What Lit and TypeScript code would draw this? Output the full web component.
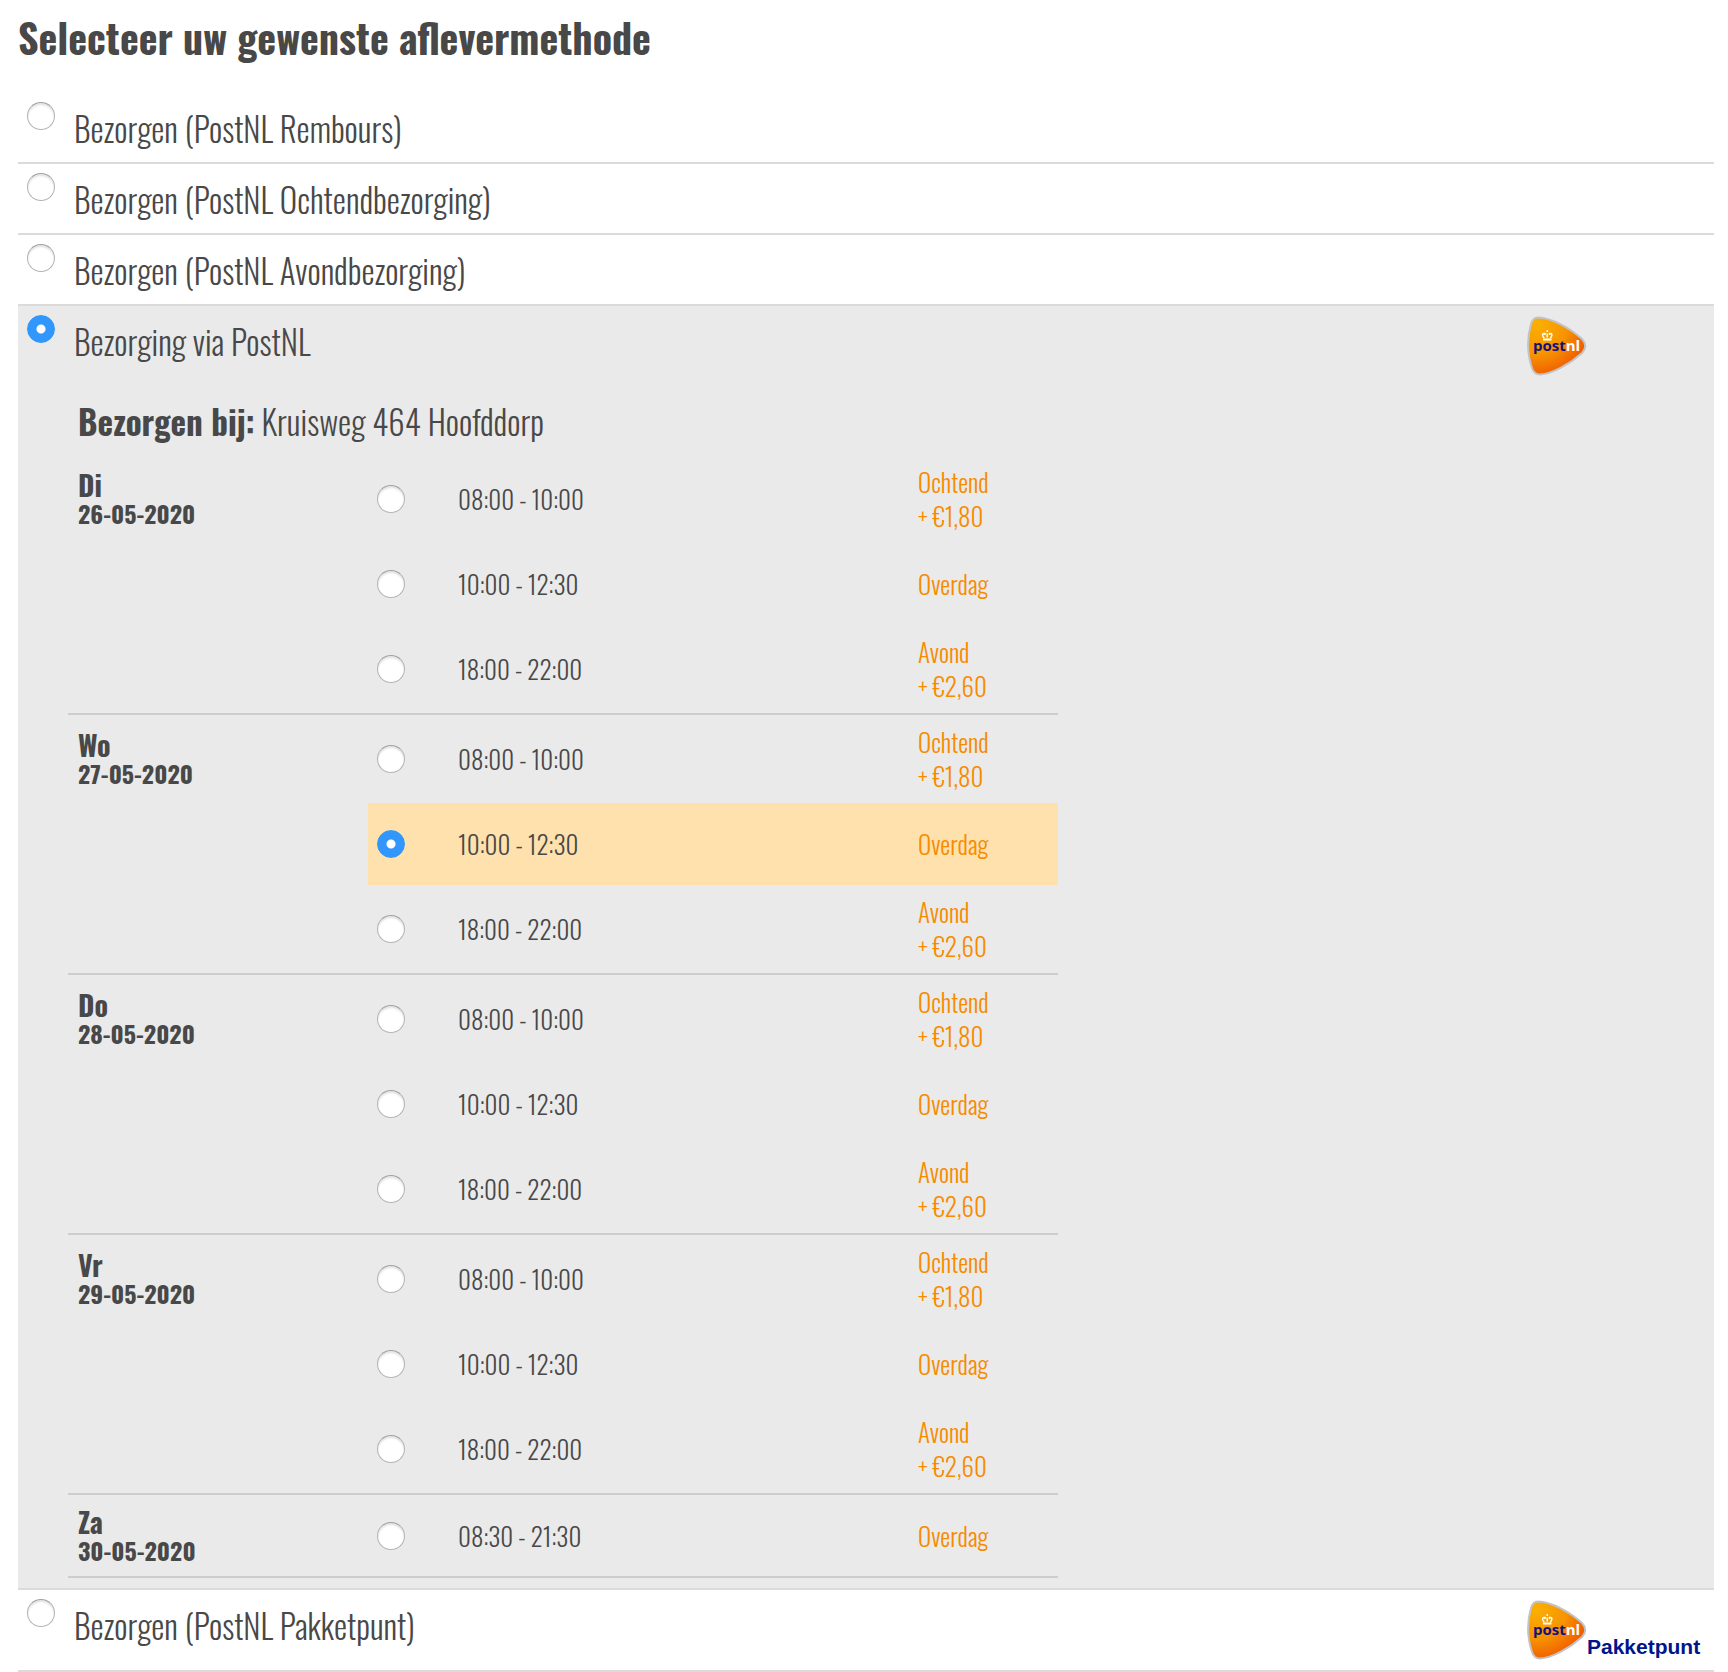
import { LitElement, html, css, svg, nothing } from "lit";
import { customElement, property, state } from "lit/decorators.js";
import { classMap } from "lit/directives/class-map.js";

interface Slot {
  time: string;
  label: string;
  price?: string;
}

interface Day {
  name: string;
  date: string;
  slots: Slot[];
}

interface Method {
  id: string;
  label: string;
  logo?: "plain" | "point";
}

const weekdaySlots: Slot[] = [
  { time: "08:00 - 10:00", label: "Ochtend", price: "+ €1,80" },
  { time: "10:00 - 12:30", label: "Overdag" },
  { time: "18:00 - 22:00", label: "Avond", price: "+ €2,60" },
];

const days: Day[] = [
  { name: "Di", date: "26-05-2020", slots: weekdaySlots },
  { name: "Wo", date: "27-05-2020", slots: weekdaySlots },
  { name: "Do", date: "28-05-2020", slots: weekdaySlots },
  { name: "Vr", date: "29-05-2020", slots: weekdaySlots },
  { name: "Za", date: "30-05-2020", slots: [{ time: "08:30 - 21:30", label: "Overdag" }] },
];

const methods: Method[] = [
  { id: "rembours", label: "Bezorgen (PostNL Rembours)" },
  { id: "ochtend", label: "Bezorgen (PostNL Ochtendbezorging)" },
  { id: "avond", label: "Bezorgen (PostNL Avondbezorging)" },
  { id: "postnl", label: "Bezorging via PostNL", logo: "plain" },
  { id: "pakketpunt", label: "Bezorgen (PostNL Pakketpunt)", logo: "point" },
];

const radioStyles = css`
  .radio {
    appearance: none;
    box-sizing: border-box;
    flex: none;
    width: 28px;
    height: 28px;
    margin: 0;
    border: 1px solid #b4b4b4;
    border-top-color: #a0a0a0;
    border-radius: 50%;
    background: #fff;
    box-shadow: inset 0 2px 2px #e2e2e2;
  }
  .radio:checked {
    border-color: #3297fd;
    background: radial-gradient(circle, #fff 0 4px, #3297fd 5px);
    box-shadow: none;
  }
`;

@customElement("postnl-logo")
export class PostnlLogo extends LitElement {
  @property({ type: Boolean }) point = false;

  static styles = css`
    :host {
      display: flex;
      align-items: flex-start;
    }
    .mark {
      display: block;
      flex: none;
      width: 60px;
      height: 60px;
    }
    .wordmark {
      font: bold 15px/20px "Open Sans", sans-serif;
    }
    .caption {
      padding-top: 35px;
      font: bold 21px/24px "Liberation Sans", Arial, sans-serif;
      color: #00148c;
    }
  `;

  render() {
    return html`
      <svg class="mark" viewBox="0 0 60 60" role="img" aria-label="PostNL">
        <defs>
          <radialGradient id="fill" cx="0.15" cy="0.12" r="1.05">
            <stop offset="0" stop-color="#fbb000" />
            <stop offset="0.5" stop-color="#f79400" />
            <stop offset="1" stop-color="#ee4a00" />
          </radialGradient>
        </defs>
        ${svg`
          <path
            d="M11 1.500C25 2 43 12 55 23Q61.500 30 55 37C43 48 25 58 13 58.500Q7 58.500 5 52C0 37 0 22 4 8Q6 1.500 11 1.500Z"
            fill="url(#fill)" stroke="#c3c3c7" stroke-width="2"/>
          <path d="M16 23.500H24.500" fill="none" stroke="#fff" stroke-width="2"/>
          <path d="M20.200 21.500V17.500M20.200 16V14M17.500 21.500H16.500Q14 17.200 18 17.500V19M23 21.500H24Q26.500 17.200 22.500 17.500V19"
            fill="none" stroke="#fff" stroke-width="1.400"/>
        `}
        <text class="wordmark" x="6" y="35" fill="#14107c">post<tspan fill="#fff">nl</tspan></text>
      </svg>
      ${this.point ? html`<span class="caption">Pakketpunt</span>` : nothing}
    `;
  }
}

@customElement("delivery-schedule")
export class DeliverySchedule extends LitElement {
  @state() private selected = "1-1";

  static styles = [
    radioStyles,
    css`
      :host {
        display: block;
        max-width: 990px;
      }
      .address {
        margin: 0;
        padding: 0 10px 13px;
        font-size: 33px;
        line-height: 40px;
      }
      .address strong {
        font-weight: 700;
      }
      .day {
        display: grid;
        grid-template-columns: 300px 1fr;
        padding: 3px 0;
        border-bottom: 2px solid #cdcdcd;
      }
      .date {
        display: flex;
        flex-direction: column;
        padding: 12px 10px 0;
        font-size: 24px;
        line-height: 29px;
        font-weight: bold;
      }
      .name {
        font-size: 28px;
      }
      .slots {
        display: grid;
        gap: 3px;
      }
      .slot {
        display: grid;
        grid-template-columns: 81px 1fr 140px;
        align-items: center;
        min-height: 82px;
        padding-left: 9px;
        font-size: 25px;
        line-height: 34px;
        cursor: pointer;
      }
      .single .date {
        padding-top: 9px;
      }
      .single .slot {
        min-height: 75px;
      }
      .chosen {
        background: #ffe1ad;
      }
      .part {
        display: flex;
        flex-direction: column;
        color: #f78b00;
      }
    `,
  ];

  render() {
    return html`
      <p class="address"><strong>Bezorgen bij:</strong> Kruisweg 464 Hoofddorp</p>
      ${days.map(
        (day, d) => html`
          <div
            class=${classMap({ day: true, single: day.slots.length === 1 })}
            role="group"
            aria-labelledby="day-${d}"
          >
            <div class="date" id="day-${d}">
              <span class="name">${day.name}</span>
              <span>${day.date}</span>
            </div>
            <div class="slots">
              ${day.slots.map((slot, s) => this.renderSlot(slot, `${d}-${s}`))}
            </div>
          </div>
        `,
      )}
    `;
  }

  private renderSlot(slot: Slot, key: string) {
    const checked = this.selected === key;
    return html`
      <label class=${classMap({ slot: true, chosen: checked })} for="slot-${key}">
        <input
          class="radio"
          type="radio"
          name="slot"
          id="slot-${key}"
          .checked=${checked}
          @change=${() => (this.selected = key)}
        />
        <span>${slot.time}</span>
        <span class="part">
          <span>${slot.label}</span>
          ${slot.price ? html`<span>${slot.price}</span>` : nothing}
        </span>
      </label>
    `;
  }
}

@customElement("app-root")
export class AppRoot extends LitElement {
  @state() private method = "postnl";

  static styles = [
    radioStyles,
    css`
      :host {
        display: block;
        padding: 11px 14px 0 18px;
        background: #fff;
        color: #484848;
        font-family: Oswald, "Liberation Sans Narrow", "Roboto Condensed", "Liberation Sans", sans-serif;
        font-weight: 300;
      }
      .title {
        margin: 0;
        padding-bottom: 30px;
        font-size: 40px;
        line-height: 52px;
        font-weight: bold;
      }
      .method {
        border-bottom: 2px solid #dbdbdb;
      }
      .active {
        background: #eaeaea;
      }
      .head {
        display: flex;
        align-items: flex-start;
        min-height: 69px;
        padding-left: 9px;
      }
      .head .radio {
        margin-top: 9px;
      }
      .label {
        flex: 1;
        padding: 16px 0 0 19px;
        font-size: 33px;
        line-height: 40px;
        cursor: pointer;
      }
      .logo {
        width: 187px;
        padding: 10px 0;
      }
      .schedule {
        padding: 16px 0 10px 50px;
      }
    `,
  ];

  render() {
    return html`
      <h1 class="title">Selecteer uw gewenste aflevermethode</h1>
      ${methods.map((m) => this.renderMethod(m))}
    `;
  }

  private renderMethod(m: Method) {
    const checked = this.method === m.id;
    return html`
      <section class=${classMap({ method: true, active: checked })}>
        <div class="head">
          <input
            class="radio"
            type="radio"
            name="method"
            id=${m.id}
            .checked=${checked}
            @change=${() => (this.method = m.id)}
          />
          <label class="label" for=${m.id}>${m.label}</label>
          ${m.logo
            ? html`<postnl-logo class="logo" ?point=${m.logo === "point"}></postnl-logo>`
            : nothing}
        </div>
        ${checked && m.id === "postnl"
          ? html`<div class="schedule"><delivery-schedule></delivery-schedule></div>`
          : nothing}
      </section>
    `;
  }
}
